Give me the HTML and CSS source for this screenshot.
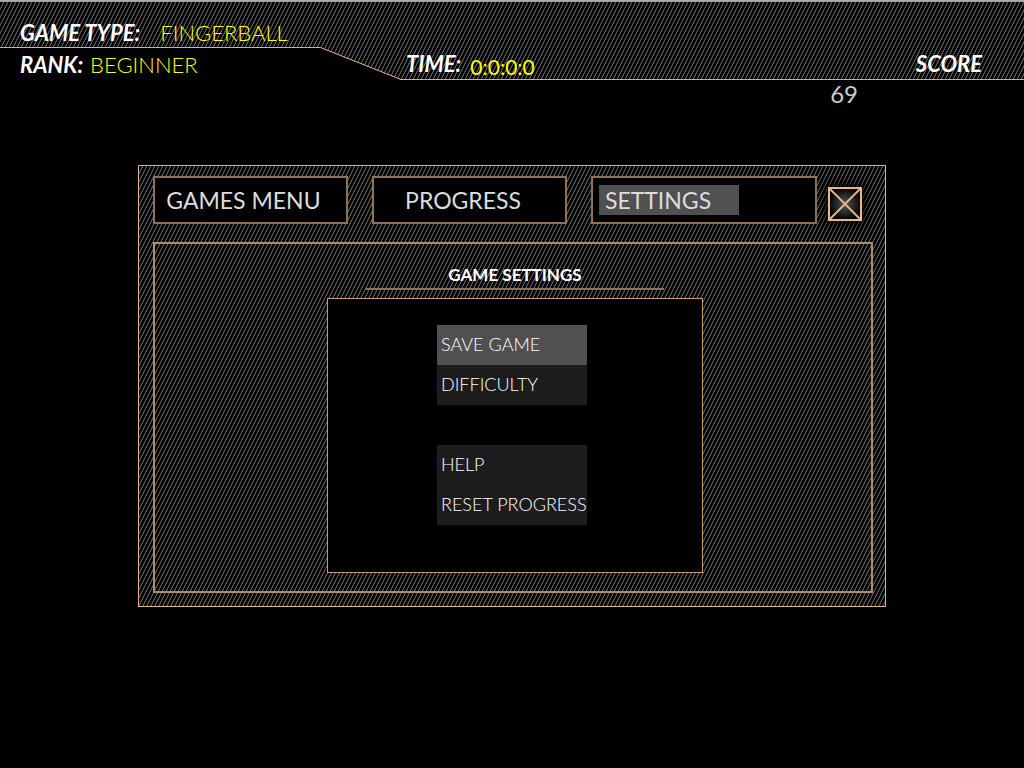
FILE: index.html
```html
<!DOCTYPE html>
<html lang="en">
<head>
<meta charset="utf-8">
<title>Game Settings</title>
<link rel="stylesheet" href="styles.css">
</head>
<body>
<header class="hud">
  <div class="hud-shape"></div>
  <svg class="hud-edge" width="401" height="80" viewBox="0 0 401 80" aria-hidden="true">
    <path d="M0 48H320L401 80H0Z" fill="#000"/>
    <path d="M0 47.5H320.500L401 79.500" fill="none" stroke="#deb27f"/>
  </svg>
  <dl class="stats">
    <div class="stat stat-type"><dt>GAME TYPE:</dt><dd>FINGERBALL</dd></div>
    <div class="stat stat-rank"><dt>RANK:</dt><dd>BEGINNER</dd></div>
  </dl>
  <div class="clock"><span class="label">TIME:</span><span class="digits">0:0:0:0</span></div>
  <div class="score-label">SCORE</div>
</header>
<div class="score">69</div>
<main class="panel">
  <nav class="tabs">
    <button class="tab" type="button">GAMES MENU</button>
    <button class="tab tab-inset" type="button">PROGRESS</button>
    <button class="tab tab-wide" type="button"><span class="picked">SETTINGS</span></button>
    <button class="close" type="button" aria-label="Close">
      <svg width="34" height="34" viewBox="0 0 34 34" aria-hidden="true"><path d="M2 2L32 32M32 2L2 32" stroke="#e8b988" stroke-width="1.8"/><rect x="1" y="1" width="32" height="32" fill="none" stroke="#e8b988" stroke-width="2"/></svg>
    </button>
  </nav>
  <section class="content">
    <h1>GAME SETTINGS</h1>
    <div class="box">
      <div class="menu">
        <button class="item active" type="button">SAVE GAME</button>
        <button class="item" type="button">DIFFICULTY</button>
      </div>
      <div class="menu">
        <button class="item" type="button">HELP</button>
        <button class="item" type="button">RESET PROGRESS</button>
      </div>
    </div>
  </section>
</main>
</body>
</html>
```
FILE: styles.css
```css
* { box-sizing: border-box; }
body {
  margin: 0;
  background: #000;
  color: #fff;
  font-family: Lato, "Liberation Sans", sans-serif;
}
button { font: inherit; color: inherit; text-align: left; cursor: pointer; }
dl, dd, h1 { margin: 0; }

.hud-shape, .panel {
  background: #000 url("data:image/svg+xml,%3Csvg xmlns='http://www.w3.org/2000/svg' width='4' height='8' shape-rendering='crispEdges'%3E%3Cpath fill='%23585858' d='M3 0h1v2h-1zM2 2h1v2h-1zM1 4h1v2h-1zM0 6h1v2h-1z'/%3E%3Cpath fill='%23303030' d='M2 1h1v1h-1zM1 3h1v1h-1zM0 5h1v1h-1zM3 7h1v1h-1z'/%3E%3C/svg%3E");
}

.hud { position: relative; display: flex; height: 80px; }
.hud-shape {
  position: absolute;
  inset: 0;
  z-index: -2;
  border-top: 2px solid #a5a9a9;
  border-bottom: 1px solid #deb27f;
}
.hud-edge { position: absolute; left: 0; top: 0; z-index: -1; }
.stats { width: 406px; padding: 17px 0 0 20px; }
.stat { display: flex; height: 32px; line-height: 32px; font-size: 22px; }
.stat dt, .label, .score-label { font-weight: 700; font-style: italic; font-size: 22px; }
.stat dd { color: #ff0; font-weight: 300; }
.stat-type { gap: 20px; }
.stat-rank { gap: 7px; }
.clock { display: flex; gap: 9px; padding-top: 48px; line-height: 32px; }
.digits { color: #ff0; font-size: 21px; padding-top: 3px; }
.score-label { margin-left: auto; padding: 48px 42px 0 0; line-height: 32px; }
.score {
  height: 30px;
  padding-right: 166px;
  text-align: right;
  font-size: 24px;
  line-height: 28px;
  color: #ccc;
}

.panel {
  width: 73%;
  margin: 55px auto 0;
  padding: 10px 12px 13px 14px;
  border: 1px solid #deb27f;
}
.tabs {
  display: grid;
  grid-template-columns: 195fr 195fr 226fr 21px;
  column-gap: 24px;
  padding-right: 11px;
}
.tab {
  height: 48px;
  padding: 0 11px;
  border: 2px solid #8f7353;
  background: #000;
  color: #ddd;
  font-size: 23px;
}
.tab-inset { padding-left: 31px; }
.tab-wide { padding: 0 6px; }
.picked {
  display: block;
  width: 140px;
  padding-left: 6px;
  line-height: 30px;
  background: #505050;
}
.close {
  width: 34px;
  height: 34px;
  margin: 11px 0 0 -13px;
  padding: 0;
  border: 0;
  background: radial-gradient(#555, #000 70%);
  box-shadow: 0 0 8px 3px #000;
}
.close svg { display: block; }
.content {
  margin-top: 18px;
  padding: 20px 0 18px 4px;
  border: 2px solid #b08e65;
}
h1 {
  width: 298px;
  margin: 0 auto;
  padding-bottom: 2px;
  border-bottom: 2px solid #8f7353;
  text-align: center;
  font-size: 17px;
  line-height: 22px;
}
.box {
  display: grid;
  gap: 40px;
  width: 376px;
  margin: 8px auto 0;
  padding: 26px 0 47px 109px;
  border: 1px solid #c69d6e;
  background: #000;
}
.menu { display: grid; grid-template-columns: 150px; }
.item {
  height: 40px;
  padding: 0 4px 2px;
  border: 0;
  background: #1c1c1c;
  font-size: 18px;
  font-weight: 300;
  white-space: nowrap;
}
.active { background: #505050; }
```
